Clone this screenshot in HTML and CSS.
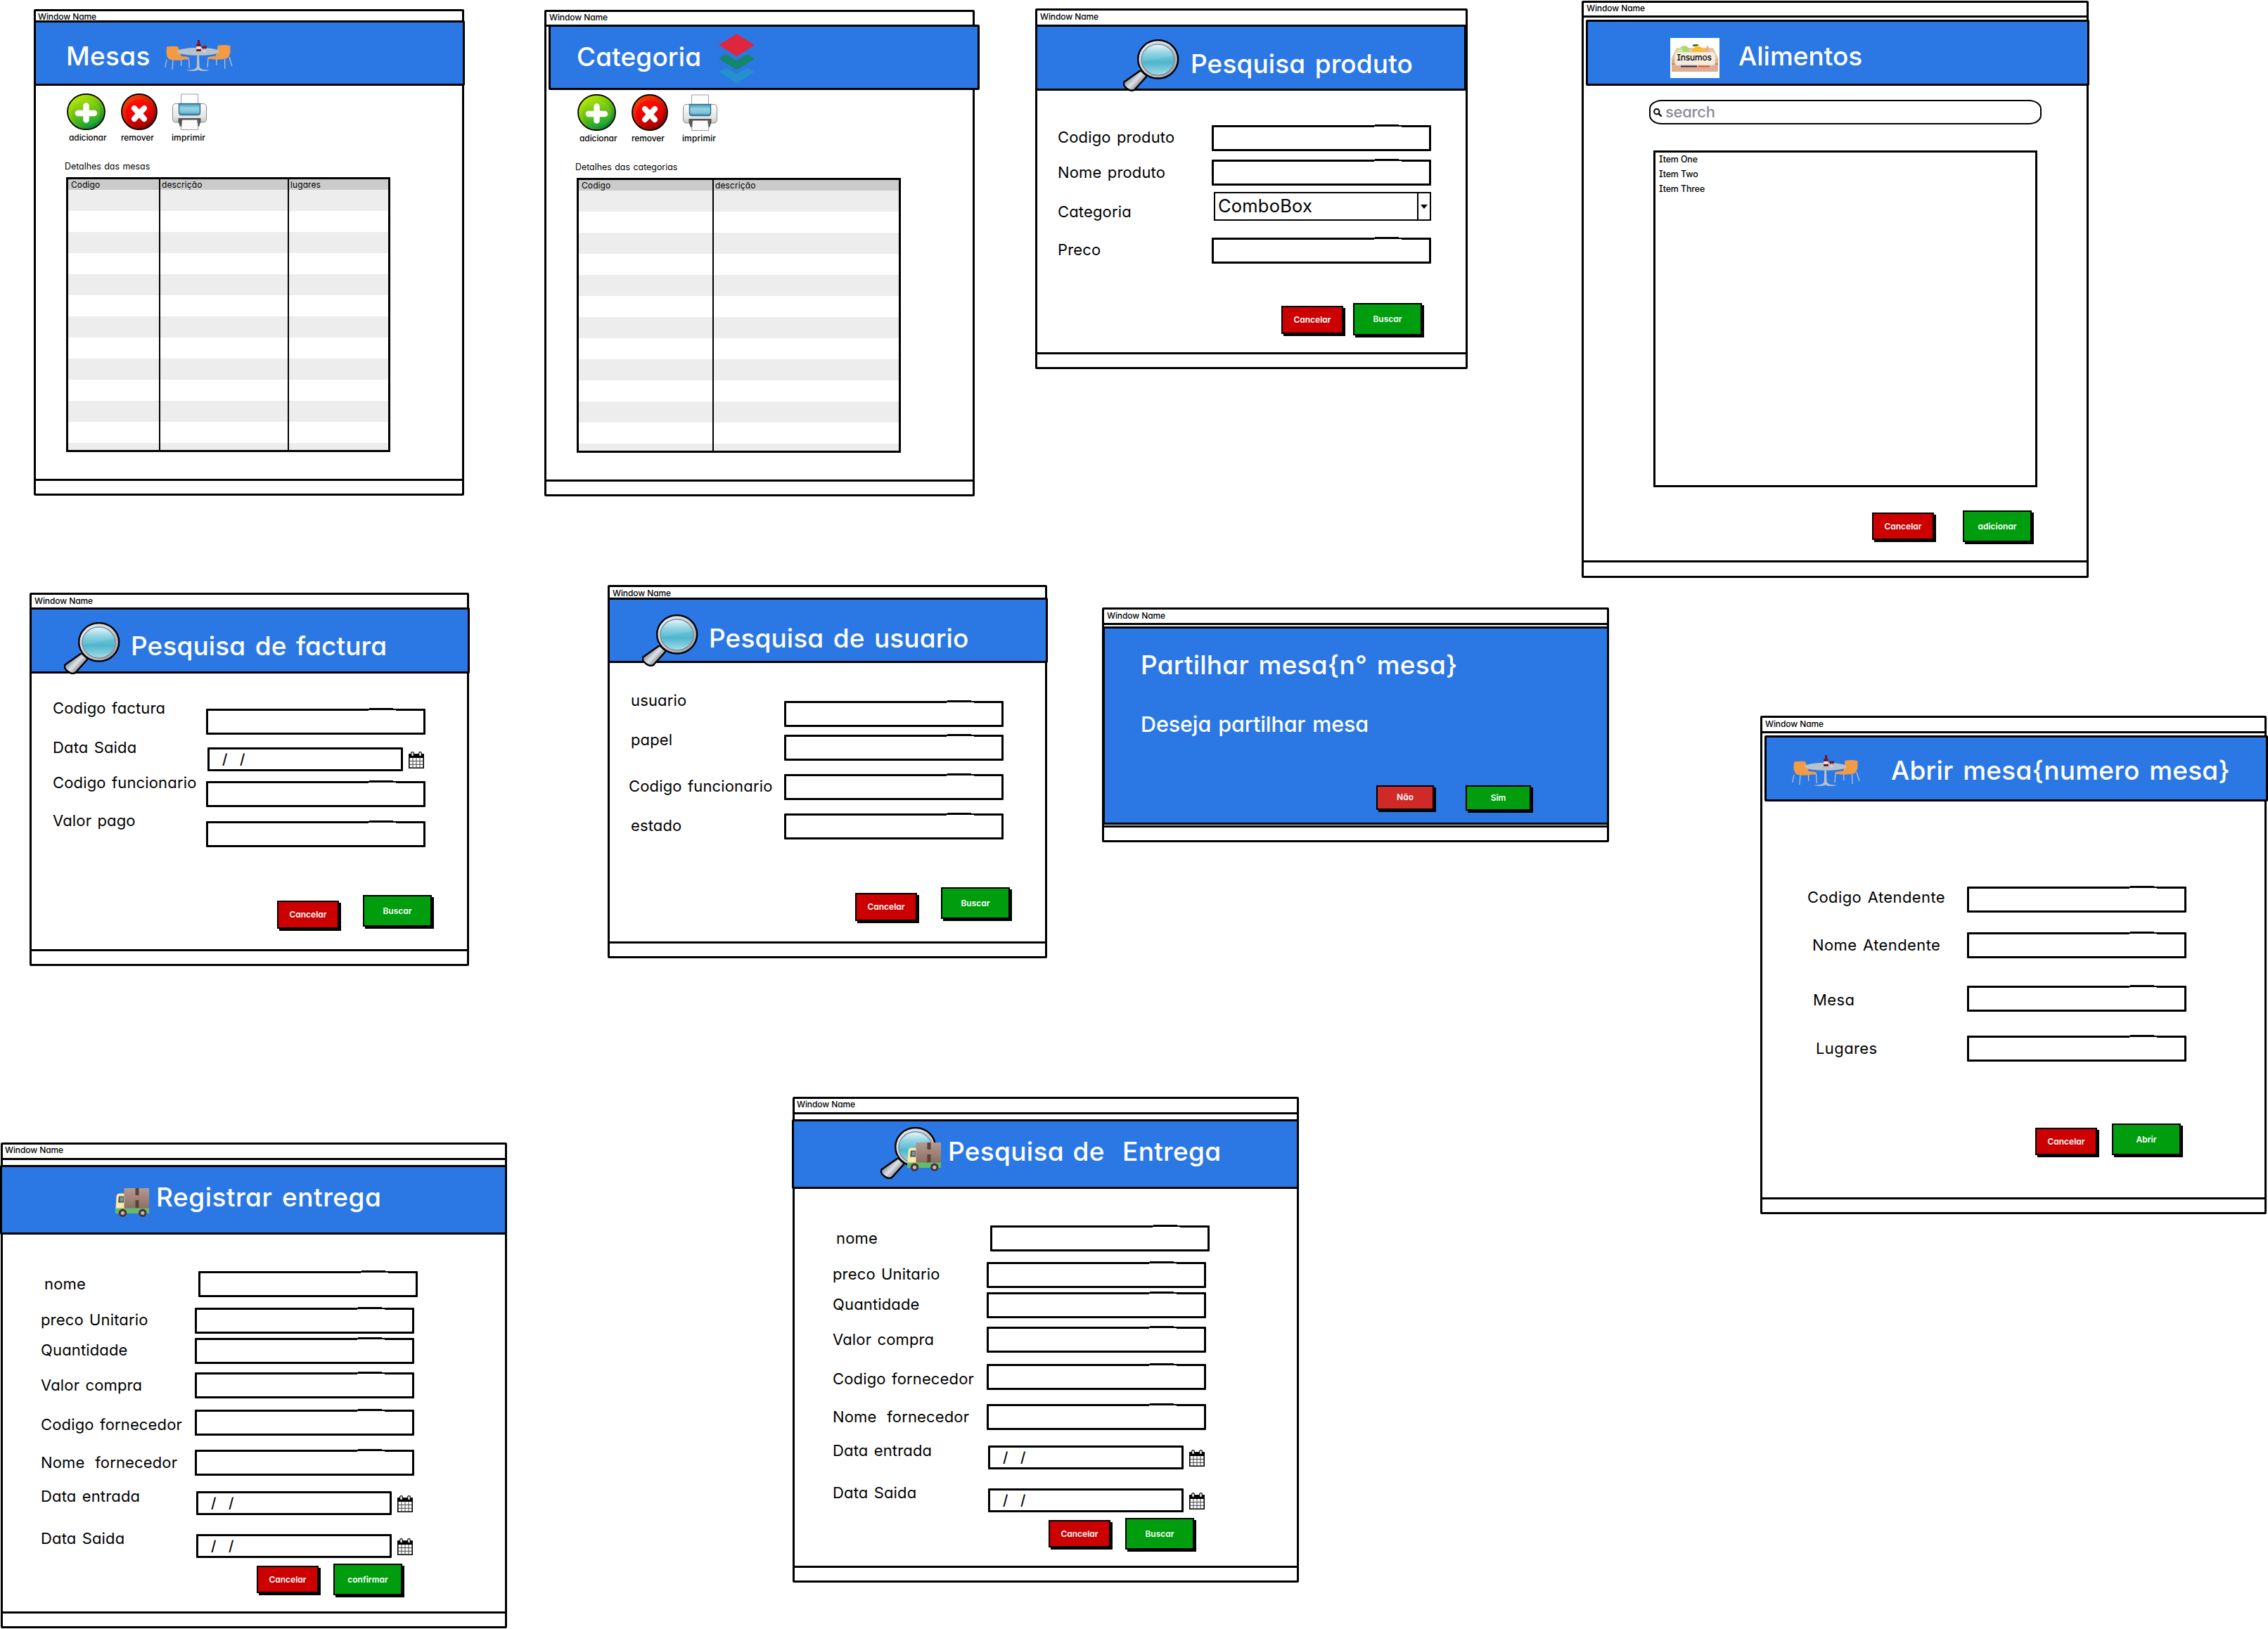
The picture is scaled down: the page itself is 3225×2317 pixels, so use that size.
FILE: index.html
```html
<!DOCTYPE html>
<html lang="pt">
<head>
<meta charset="utf-8">
<title>Wireframes - Restaurante</title>
<link rel="stylesheet" href="styles.css">
</head>
<body>
<svg class="defs" width="0" height="0" aria-hidden="true">
  <defs>
    <filter id="rough" x="-2%" y="-10%" width="104%" height="120%" color-interpolation-filters="sRGB">
      <feTurbulence type="fractalNoise" baseFrequency="0.006 0.02" numOctaves="1" seed="4" result="n"/>
      <feDisplacementMap in="SourceGraphic" in2="n" scale="2.2" xChannelSelector="R" yChannelSelector="G"/>
    </filter>
    <linearGradient id="gAdd" x1="0.1" y1="0" x2="0.8" y2="1"><stop offset="0" stop-color="#c6f500"/><stop offset="0.45" stop-color="#7cc80c"/><stop offset="1" stop-color="#007a3c"/></linearGradient>
    <linearGradient id="gAddIn" x1="0.3" y1="0" x2="0.6" y2="1"><stop offset="0" stop-color="#a5dd10"/><stop offset="0.6" stop-color="#5cbb18"/><stop offset="1" stop-color="#0da83c"/></linearGradient>
    <linearGradient id="gDel" x1="0.1" y1="0" x2="0.8" y2="1"><stop offset="0" stop-color="#ff4a00"/><stop offset="0.5" stop-color="#d81a00"/><stop offset="1" stop-color="#6d0000"/></linearGradient>
    <linearGradient id="gDelIn" x1="0.3" y1="0" x2="0.6" y2="1"><stop offset="0" stop-color="#ff1200"/><stop offset="0.5" stop-color="#f00000"/><stop offset="1" stop-color="#b00000"/></linearGradient>
    <linearGradient id="gPrn" x1="0" y1="0" x2="0" y2="1"><stop offset="0" stop-color="#ffffff"/><stop offset="0.7" stop-color="#e4e4e4"/><stop offset="1" stop-color="#c9c9c9"/></linearGradient>
    <linearGradient id="gScr" x1="0" y1="0" x2="0" y2="1"><stop offset="0" stop-color="#4a9ab8"/><stop offset="0.4" stop-color="#93d3e4"/><stop offset="0.75" stop-color="#7cc3d9"/><stop offset="1" stop-color="#3d86a8"/></linearGradient>
    <linearGradient id="gGlass" x1="0" y1="0" x2="0" y2="1"><stop offset="0" stop-color="#e8f8fb"/><stop offset="0.3" stop-color="#8fd3e3"/><stop offset="0.6" stop-color="#55b9d0"/><stop offset="1" stop-color="#c8ecf3"/></linearGradient>
    <linearGradient id="gRing" x1="0" y1="0" x2="1" y2="1"><stop offset="0" stop-color="#f4f5f8"/><stop offset="0.5" stop-color="#c9cdd6"/><stop offset="1" stop-color="#8d929e"/></linearGradient>
    <linearGradient id="gHandle" x1="0.2" y1="0.3" x2="0.8" y2="0.8"><stop offset="0" stop-color="#7b808b"/><stop offset="0.45" stop-color="#dfe2e8"/><stop offset="1" stop-color="#5c616b"/></linearGradient>
    <linearGradient id="gBox" x1="0" y1="0" x2="0" y2="1"><stop offset="0" stop-color="#b39a92"/><stop offset="1" stop-color="#8d6e63"/></linearGradient>
  </defs>
  <symbol id="add" viewBox="0 0 55 52">
    <ellipse cx="27.5" cy="26" rx="26.5" ry="25.2" fill="url(#gAdd)" stroke="#000" stroke-width="1.8"/>
    <ellipse cx="27.5" cy="27.500" rx="20.500" ry="19" fill="url(#gAddIn)"/>
    <path d="M27.5 17.500V37.500M16 28H39" stroke="#fff" stroke-width="8.500" stroke-linecap="round"/>
  </symbol>
  <symbol id="del" viewBox="0 0 52 52">
    <ellipse cx="26" cy="26" rx="25" ry="25.2" fill="url(#gDel)" stroke="#000" stroke-width="1.8"/>
    <ellipse cx="26" cy="27.500" rx="19.500" ry="19" fill="url(#gDelIn)"/>
    <path d="M19 21L33 36M33 21L19 36" stroke="#fff" stroke-width="8" stroke-linecap="round"/>
  </symbol>
  <symbol id="prn" viewBox="0 0 49 52">
    <path d="M12.500 1H36.500V16H12.500Z" fill="#fff" stroke="#9b9b9b"/>
    <path d="M5 14.500H44Q48.500 14.500 48.500 20V36Q48.500 41 44 41H5Q0.500 41 0.500 36V20Q0.500 14.500 5 14.500Z" fill="url(#gPrn)" stroke="#8c8c8c"/>
    <path d="M9.500 14.500H39.500V27Q39.500 30.500 36 30.500H13Q9.500 30.500 9.500 27Z" fill="url(#gScr)" stroke="#2f6d8c" stroke-width="1.400"/>
    <path d="M8.500 35H40.500V40L38 47H11L8.500 40Z" fill="#555"/>
    <path d="M14 37.500H35.500L37 51.500H12.500Z" fill="#fbfbfb" stroke="#9b9b9b"/>
  </symbol>
  <symbol id="mag" viewBox="0 0 80 74">
    <path d="M25 44L34 52L16.500 71.500Q12 75 5.500 70Q-1 65 1.500 60.500Z" fill="url(#gHandle)" stroke="#000" stroke-width="2.400" stroke-linejoin="round"/>
    <path d="M24 40L36 51" stroke="#b9bdc6" stroke-width="5"/>
    <ellipse cx="49.700" cy="28.300" rx="28.500" ry="27.200" fill="url(#gRing)" stroke="#000" stroke-width="2.400"/>
    <ellipse cx="49.500" cy="28.800" rx="23.500" ry="22" fill="url(#gGlass)" stroke="#7f8c99" stroke-width="1.600"/>
    <path d="M27 32Q48 29 72 23Q73 40 60 46Q48 53 36 45Q28 39 27 32Z" fill="#3fb0ca" fill-opacity="0.280"/>
  </symbol>
  <symbol id="truck" viewBox="0 0 48 41">
    <path d="M0.500 29L1.500 12Q2 7.500 6 7.500H13V29Z" fill="#ffe8a5"/>
    <path d="M4 20.500L5 11.500H12V20.500Z" fill="#455a64"/><path d="M6.500 18.500L7 13H11V18.500Z" fill="#7f97a2"/>
    <path d="M12.500 0H48V28.500H12.500Z" fill="url(#gBox)"/>
    <path d="M28.500 0H33.500V10H28.500ZM28.500 17H33.500V28H28.500Z" fill="#5d4037"/>
    <path d="M0 28.500H48V36H0Z" fill="#66bb6a"/>
    <circle cx="10.500" cy="35.300" r="5.700" fill="#4e342e"/><circle cx="10.500" cy="35.300" r="2.600" fill="#bdbdbd"/>
    <circle cx="38.800" cy="35.300" r="5.700" fill="#4e342e"/><circle cx="38.800" cy="35.300" r="2.600" fill="#bdbdbd"/>
  </symbol>
  <symbol id="dine" viewBox="0 0 97 45">
    <path d="M3 28L0.800 39M12 28L11 42M23.500 28L23.800 37M34.500 27L35.300 40M62 26L61 39M73.500 26L74 36M85.500 27L86 41M92 24L95.800 37" stroke="#c3cad3" stroke-width="1.200" fill="none"/>
    <path d="M3 9.500Q12 8 19 9.200Q21 14 24 23Q31 23 35.500 25Q35 28 30 27.500Q16 30 7 27.500Q3 25 2.500 18Z" fill="#f39b44"/>
    <path d="M93.500 8Q84 6 75.500 8Q75 16 73 22.500Q66 23 61 24.500Q61.500 27.500 66 27Q78 29 89 26Q93 23 93.500 16Z" fill="#f39b44"/>
    <ellipse cx="48" cy="16.300" rx="30" ry="5.500" fill="#b9c1c9"/>
    <path d="M46.300 21H49L49.600 38Q51 43 64.500 42.500Q55 45.500 47.700 42.500Q39 45.500 30 42.500Q44 43.500 45.800 38Z" fill="#b9c1c9"/>
    <path d="M47 0H50V4.500L51.800 6.500V16H45.200V6.500L47 4.500Z" fill="#7a1420"/><path d="M45.200 9H51.800V12.800H45.200Z" fill="#f3e8e8"/>
    <path d="M53.300 8.500H60L59.300 12.500H54Z" fill="#7a1420"/><path d="M56.700 12V16M54.500 16.200H59" stroke="#e6ebf0" stroke-width="0.800"/>
  </symbol>
  <symbol id="layers" viewBox="0 0 51 71">
    <path d="M0 54L8 49.500Q10 48.500 12 49.500L25.500 57L39 49.500Q41 48.500 43 49.500L51 54L25.500 70.500Z" fill="#2490cf"/>
    <path d="M0 35.500L8 30Q10 28.800 12 30L25.500 38L39 30Q41 28.800 43 30L51 35.500L25.500 51.500Z" fill="#14866a"/>
    <path d="M25.500 0L51 16L25.500 32.200L0 16Z" fill="#e0263f"/>
  </symbol>
  <symbol id="cal" viewBox="0 0 22 24">
    <path d="M0.800 4H21.200V23.200H0.800Z" fill="#fff" stroke="#000" stroke-width="1.600"/>
    <path d="M0 3.500H22V9H0Z"/>
    <path d="M6 9V23M11 9V23M16 9V23M1 13.500H21M1 18.300H21" stroke="#333" stroke-width="0.900"/>
    <rect x="3.700" y="0.700" width="3.600" height="6" rx="1.700" fill="#fff" stroke="#000" stroke-width="1.200"/>
    <rect x="14.700" y="0.700" width="3.600" height="6" rx="1.700" fill="#fff" stroke="#000" stroke-width="1.200"/>
  </symbol>
</svg>

<main class="board">

  <section class="win mesas">
    <div class="bar">Window Name</div>
    <header class="banner"><h1>Mesas</h1><svg class="i-dine"><use href="#dine"/></svg></header>
    <div class="body">
      <div class="tools">
        <div class="tool"><svg class="i-add"><use href="#add"/></svg><span>adicionar</span></div>
        <div class="tool"><svg class="i-del"><use href="#del"/></svg><span>remover</span></div>
        <div class="tool"><svg class="i-prn"><use href="#prn"/></svg><span>imprimir</span></div>
      </div>
      <p class="caption">Detalhes das mesas</p>
      <div class="table cols3"><span>Codigo</span><span>descrição</span><span>lugares</span></div>
    </div>
    <div class="foot"></div>
  </section>

  <section class="win categoria">
    <div class="bar line">Window Name</div>
    <header class="banner"><h1>Categoria</h1><svg class="i-layers"><use href="#layers"/></svg></header>
    <div class="body">
      <div class="tools">
        <div class="tool"><svg class="i-add"><use href="#add"/></svg><span>adicionar</span></div>
        <div class="tool"><svg class="i-del"><use href="#del"/></svg><span>remover</span></div>
        <div class="tool"><svg class="i-prn"><use href="#prn"/></svg><span>imprimir</span></div>
      </div>
      <p class="caption">Detalhes das categorias</p>
      <div class="table cols2"><span>Codigo</span><span>descrição</span></div>
    </div>
    <div class="foot"></div>
  </section>

  <section class="win produto">
    <div class="bar">Window Name</div>
    <header class="banner"><svg class="i-mag"><use href="#mag"/></svg><h1>Pesquisa produto</h1></header>
    <div class="body">
      <div class="row"><label>Codigo produto</label><div class="input"></div></div>
      <div class="row"><label>Nome produto</label><div class="input"></div></div>
      <div class="row"><label>Categoria</label><div class="combo"><span>ComboBox</span><i><svg class="i-arrow" viewBox="0 0 10 6"><path d="M0 0H10L5 6Z"/></svg></i></div></div>
      <div class="row"><label>Preco</label><div class="input"></div></div>
      <div class="actions"><div class="btn red">Cancelar</div><div class="btn green">Buscar</div></div>
    </div>
    <div class="foot"></div>
  </section>

  <section class="win alimentos">
    <div class="bar line">Window Name</div>
    <header class="banner">
      <svg class="i-food" viewBox="0 0 70 57">
        <path d="M0 0H70V57H0Z" fill="#fff"/>
        <path d="M9 14H61L69 30H1Z" fill="#ecc6a4"/>
        <circle cx="20" cy="18" r="7" fill="#a8dc6c"/><circle cx="14" cy="19" r="4.500" fill="#c9ec98"/>
        <path d="M30 19Q34 11 42 12Q48 15 50 21H28Z" fill="#fbbd23"/><path d="M46 20L54 10L55 20Z" fill="#f0b070"/>
        <path d="M31 11Q35 7 41 10Q36 14 31 11Z" fill="#3d7a1d"/>
        <path d="M2 30H68V48H2Z" fill="#dfae90"/><path d="M2 36H68V38H2Z" fill="#c08a68"/>
        <path d="M15 37H38V41.500H15Z" fill="#3c2c55"/><path d="M40 37H56V41.500H40Z" fill="#e2552a"/>
        <rect x="6.500" y="20" width="57.500" height="19" rx="4" fill="#f6f1e4" fill-opacity="0.930" stroke="#d8cdb4" stroke-width="0.700"/>
        <text x="9.500" y="32" textLength="49.500" class="food-label">Insumos</text>
      </svg>
      <h1>Alimentos</h1>
    </header>
    <div class="body">
      <div class="search"><svg class="i-find" viewBox="0 0 12 12"><circle cx="4.800" cy="4.800" r="3.700" fill="none" stroke="#000" stroke-width="2"/><path d="M7.500 7.500L11 11" stroke="#000" stroke-width="2.400" stroke-linecap="round"/></svg><span>search</span></div>
      <ul class="list"><li>Item One</li><li>Item Two</li><li>Item Three</li></ul>
      <div class="actions"><div class="btn red">Cancelar</div><div class="btn green">adicionar</div></div>
    </div>
    <div class="foot"></div>
  </section>

  <section class="win factura">
    <div class="bar">Window Name</div>
    <header class="banner"><svg class="i-mag"><use href="#mag"/></svg><h1>Pesquisa de factura</h1></header>
    <div class="body">
      <div class="row"><label>Codigo factura</label><div class="input"></div></div>
      <div class="row"><label>Data Saida</label><div class="date">/&nbsp; /</div><svg class="i-cal"><use href="#cal"/></svg></div>
      <div class="row"><label>Codigo funcionario</label><div class="input"></div></div>
      <div class="row"><label>Valor pago</label><div class="input"></div></div>
      <div class="actions"><div class="btn red">Cancelar</div><div class="btn green">Buscar</div></div>
    </div>
    <div class="foot"></div>
  </section>

  <section class="win usuario">
    <div class="bar">Window Name</div>
    <header class="banner"><svg class="i-mag"><use href="#mag"/></svg><h1>Pesquisa de usuario</h1></header>
    <div class="body">
      <div class="row"><label>usuario</label><div class="input"></div></div>
      <div class="row"><label>papel</label><div class="input"></div></div>
      <div class="row"><label>Codigo funcionario</label><div class="input"></div></div>
      <div class="row"><label>estado</label><div class="input"></div></div>
      <div class="actions"><div class="btn red">Cancelar</div><div class="btn green">Buscar</div></div>
    </div>
    <div class="foot"></div>
  </section>

  <section class="win partilhar">
    <div class="bar line">Window Name</div>
    <div class="banner">
      <h1>Partilhar mesa{n° mesa}</h1>
      <p>Deseja partilhar mesa</p>
      <div class="actions"><div class="btn red">Não</div><div class="btn green">Sim</div></div>
    </div>
    <div class="foot"></div>
  </section>

  <section class="win abrir">
    <div class="bar line">Window Name</div>
    <header class="banner"><svg class="i-dine"><use href="#dine"/></svg><h1>Abrir mesa{numero mesa}</h1></header>
    <div class="body">
      <div class="row"><label>Codigo Atendente</label><div class="input"></div></div>
      <div class="row"><label>Nome Atendente</label><div class="input"></div></div>
      <div class="row"><label>Mesa</label><div class="input"></div></div>
      <div class="row"><label>Lugares</label><div class="input"></div></div>
      <div class="actions"><div class="btn red">Cancelar</div><div class="btn green">Abrir</div></div>
    </div>
    <div class="foot"></div>
  </section>

  <section class="win entrega registrar">
    <div class="bar line">Window Name</div>
    <header class="banner"><svg class="i-truck"><use href="#truck"/></svg><h1>Registrar entrega</h1></header>
    <div class="body">
      <div class="row"><label>nome</label><div class="input"></div></div>
      <div class="row"><label>preco Unitario</label><div class="input"></div></div>
      <div class="row"><label>Quantidade</label><div class="input"></div></div>
      <div class="row"><label>Valor compra</label><div class="input"></div></div>
      <div class="row"><label>Codigo fornecedor</label><div class="input"></div></div>
      <div class="row"><label>Nome&nbsp; fornecedor</label><div class="input"></div></div>
      <div class="row"><label>Data entrada</label><div class="date">/&nbsp; /</div><svg class="i-cal"><use href="#cal"/></svg></div>
      <div class="row"><label>Data Saida</label><div class="date">/&nbsp; /</div><svg class="i-cal"><use href="#cal"/></svg></div>
      <div class="actions"><div class="btn red">Cancelar</div><div class="btn green">confirmar</div></div>
    </div>
    <div class="foot"></div>
  </section>

  <section class="win entrega pesquisa">
    <div class="bar line">Window Name</div>
    <header class="banner"><svg class="i-mag"><use href="#mag"/></svg><svg class="i-truck"><use href="#truck"/></svg><h1>Pesquisa de&nbsp; Entrega</h1></header>
    <div class="body">
      <div class="row"><label>nome</label><div class="input"></div></div>
      <div class="row"><label>preco Unitario</label><div class="input"></div></div>
      <div class="row"><label>Quantidade</label><div class="input"></div></div>
      <div class="row"><label>Valor compra</label><div class="input"></div></div>
      <div class="row"><label>Codigo fornecedor</label><div class="input"></div></div>
      <div class="row"><label>Nome&nbsp; fornecedor</label><div class="input"></div></div>
      <div class="row"><label>Data entrada</label><div class="date">/&nbsp; /</div><svg class="i-cal"><use href="#cal"/></svg></div>
      <div class="row"><label>Data Saida</label><div class="date">/&nbsp; /</div><svg class="i-cal"><use href="#cal"/></svg></div>
      <div class="actions"><div class="btn red">Cancelar</div><div class="btn green">Buscar</div></div>
    </div>
    <div class="foot"></div>
  </section>

</main>
</body>
</html>
```

FILE: styles.css
```css
* { box-sizing: border-box; margin: 0; padding: 0; }

body {
  background: #fff;
  color: #000;
  font-family: Inter, "Noto Sans", sans-serif;
  font-feature-settings: "cv11" 1;
  font-size: 12px;
  line-height: 1;
}

.defs { position: absolute; }
.board { position: relative; width: 3225px; height: 2317px; overflow: hidden; }
svg { display: block; flex: none; }

/* window frame */
.win {
  position: absolute;
  display: flex;
  flex-direction: column;
  background: #fff;
  border: 3px solid #000;
  border-radius: 2px;
  white-space: nowrap;
}
.bar { flex: none; padding: 3px 0 0 4px; font-weight: 500; letter-spacing: -0.1px; }
.bar.line { border-bottom: 3px solid #000; height: 22px; }
.banner {
  flex: none;
  display: flex;
  align-items: flex-start;
  background: #2b78e4;
  border: 3px solid #000;
  border-radius: 2px;
  color: #fff;
}
.body { flex: 1; }
.foot { flex: none; height: 21px; margin-top: auto; border-top: 3px solid #000; }
h1 { font-size: 37px; font-weight: 500; line-height: 1; letter-spacing: 0.1px; word-spacing: 3.5px; }

/* icons */
.i-add { width: 55px; height: 52px; }
.i-del { width: 52px; height: 52px; }
.i-prn { width: 49px; height: 52px; }
.i-mag { width: 80px; height: 74px; }
.i-truck { width: 48px; height: 41px; }
.i-dine { width: 97px; height: 45px; }
.i-layers { width: 51px; height: 71px; }
.i-food { width: 70px; height: 57px; }
.i-cal { width: 22px; height: 24px; margin: 6px 0 0 8px; }
.i-find { width: 12px; height: 12px; }
.i-arrow { width: 10px; height: 6px; }
.food-label { font-size: 12px; font-weight: 500; font-feature-settings: "cv11" 1, "cv08" 1; }

/* form rows */
.body { padding-left: var(--pad, 0); }
.row { display: flex; align-items: flex-start; margin-top: var(--gap); }
.row label {
  flex: none;
  width: var(--label);
  margin-top: var(--shift);
  padding-left: var(--indent, 0);
  height: 22px;
  font-size: 22px;
  letter-spacing: 0.15px;
  word-spacing: 2px;
}
.input { width: 312px; height: 37px; border: 3px solid #000; border-radius: 1px; filter: url(#rough); }
.date {
  width: 278px;
  height: 34px;
  margin-left: 2px;
  padding: 4px 0 0 18px;
  border: 3px solid #000;
  border-radius: 1px;
  font-size: 20px;
  font-weight: 500;
  letter-spacing: 2.3px;
}
.combo {
  display: flex;
  width: 309px;
  height: 41px;
  margin-left: 3px;
  border: 2px solid #000;
}
.combo span { flex: 1; padding: 5px 0 0 4px; font-size: 25.500px; letter-spacing: 0.2px; }
.combo i { display: flex; justify-content: center; width: 18px; padding-top: 16px; border-left: 2px solid #000; }

/* buttons */
.actions { display: flex; align-items: flex-start; }
.btn {
  display: flex;
  align-items: center;
  justify-content: center;
  width: 88px;
  height: 40px;
  border: 2px solid #000;
  box-shadow: 3px 3px 0 #000;
  color: #fff;
  font-weight: 600;
}
.red { background: #c00; }
.green { width: 98px; height: 45px; background: #009e0f; }

/* toolbar and tables */
.tools { display: flex; margin-left: 44px; }
.tool { width: 77px; }
.tool span { display: block; margin-top: 5px; font-weight: 500; letter-spacing: -0.1px; }
.tool:nth-child(1) span { margin-left: 3px; }
.tool:nth-child(2) { width: 72px; }
.tool:nth-child(3) { width: 52px; }
.tool:nth-child(3) svg { margin-left: 1px; }
.tool:nth-child(3) span { letter-spacing: 0.1px; }
.caption { margin: 29px 0 9px 41px; font-size: 12.400px; word-spacing: 1px; }
.table {
  display: grid;
  width: 461px;
  height: 391px;
  margin-left: 43px;
  border: 3px solid #000;
  background:
    linear-gradient(#cbcbcb, #cbcbcb) 0 0 / 100% 15px no-repeat,
    repeating-linear-gradient(#ededed 0 30px, #fff 30px 60px) 0 15px;
}
.table span { padding: 2px 0 0 2px; border-right: 2px solid #000; letter-spacing: 0.1px; }
.table span:first-child { padding-left: 4px; }
.table span:last-child { border-right: 0; }
.cols3 { grid-template-columns: 131px 183px 1fr; }
.cols2 { grid-template-columns: 192px 1fr; }

/* Mesas */
.mesas { left: 48px; top: 13px; width: 612px; height: 692px; }
.mesas .bar { height: 13px; padding: 2px 0 0 3px; }
.mesas .banner { width: 613px; height: 93px; margin-left: -3px; }
.mesas h1 { margin: 29px 0 0 43px; letter-spacing: 0.3px; }
.mesas .i-dine { margin: 25px 0 0 20px; }
.mesas .tools { margin-top: 11px; }

/* Categoria */
.categoria { left: 774px; top: 14px; width: 612px; height: 692px; }
.categoria .bar { height: 21px; padding-top: 2px; }
.categoria .banner { width: 613px; height: 93px; margin: -3px 0 0 3px; }
.categoria h1 { margin: 24px 0 0 37px; }
.categoria .i-layers { margin: 10px 0 0 25px; }
.categoria .tools { margin-top: 6px; }

/* Pesquisa produto */
.produto { left: 1472px; top: 12px; width: 615px; height: 513px; --pad: 29px; --label: 219px; }
.produto .bar { height: 20px; }
.produto .banner { width: 613px; height: 94px; margin-left: -3px; }
.produto .i-mag { margin: 18px 0 0 122px; }
.produto h1 { margin: 34px 0 0 16px; }
.produto .row:nth-child(1) { --gap: 49px; --shift: 6px; }
.produto .row:nth-child(2) { --gap: 12px; --shift: 7px; }
.produto .row:nth-child(3) { --gap: 9px; --shift: 17px; }
.produto .row:nth-child(4) { --gap: 24px; --shift: 6px; }
.produto .actions { gap: 14px; margin: 56px 0 0 318px; }
.produto .red { margin-top: 4px; }
.produto .green { height: 46px; }

/* Alimentos */
.alimentos { left: 2249px; top: 1px; width: 721px; height: 821px; }
.alimentos .bar { height: 21px; padding-top: 2px; }
.alimentos .banner { width: 716px; height: 94px; margin: 3px 0 0 3px; }
.alimentos .i-food { margin: 23px 0 0 117px; }
.alimentos h1 { margin: 30px 0 0 27px; letter-spacing: 0; }
.search {
  display: flex;
  width: 558px;
  height: 35px;
  margin: 20px 0 0 93px;
  padding-left: 4px;
  border: 2px solid #000;
  border-radius: 18px / 13px;
}
.search svg { margin-top: 10px; }
.search span { margin: 4px 0 0 5px; color: #8b8b96; font-size: 22px; font-weight: 500; letter-spacing: -0.3px; }
.list { width: 546px; height: 479px; margin: 37px 0 0 99px; padding-left: 5px; border: 3px solid #000; list-style: none; }
.list li { height: 20.900px; font-size: 12.400px; line-height: 20px; font-weight: 500; letter-spacing: -0.1px; font-feature-settings: "cv11" 1, "cv08" 1; }
.alimentos .actions { gap: 41px; margin: 33px 0 0 410px; }
.alimentos .red { height: 39px; margin-top: 3px; }
.alimentos .foot { height: 22px; }

/* Pesquisa de factura */
.factura { left: 42px; top: 843px; width: 625px; height: 531px; --pad: 30px; --label: 218px; }
.factura .bar { height: 18px; }
.factura .banner { width: 626px; height: 94px; margin-left: -3px; }
.factura .i-mag { margin: 18px 0 0 46px; }
.factura h1 { margin: 33px 0 0 15px; }
.factura .row:nth-child(1) { --gap: 50px; --shift: -12px; }
.factura .row:nth-child(2) { --gap: 18px; --shift: -11px; }
.factura .row:nth-child(3) { --gap: 14px; --shift: -9px; }
.factura .row:nth-child(4) { --gap: 20px; --shift: -12px; }
.factura .actions { gap: 34px; margin: 68px 0 0 319px; }
.factura .red, .usuario .red { margin-top: 8px; }

/* Pesquisa de usuario */
.usuario { left: 864px; top: 832px; width: 625px; height: 531px; --pad: 27px; --label: 221px; }
.usuario .bar { height: 15px; }
.usuario .banner { width: 626px; height: 93px; margin-left: -3px; }
.usuario .i-mag { margin: 21px 0 0 46px; }
.usuario h1 { margin: 36px 0 0 15px; }
.usuario .row:nth-child(1) { --gap: 54px; --shift: -12px; --indent: 3px; }
.usuario .row:nth-child(2) { --gap: 11px; --shift: -4px; --indent: 3px; }
.usuario .row:nth-child(3) { --gap: 19px; --shift: 6px; }
.usuario .row:nth-child(4) { --gap: 19px; --shift: 6px; --indent: 3px; }
.usuario .actions { gap: 34px; margin: 68px 0 0 322px; }

/* Partilhar mesa */
.partilhar { left: 1567px; top: 864px; width: 721px; height: 334px; }
.partilhar .banner { flex-direction: column; width: 720px; height: 282px; margin: 2px 0 0 -2px; }
.partilhar h1 { margin: 33px 0 0 51px; letter-spacing: 0.22px; }
.partilhar p { margin: 51px 0 0 51px; font-size: 30.500px; font-weight: 500; letter-spacing: -0.1px; word-spacing: 2px; }
.partilhar .actions { gap: 45px; margin: 71px 0 0 386px; }
.partilhar .red { width: 82px; height: 35px; background: #cf2a27; }
.partilhar .green { width: 93px; height: 36px; }

/* Abrir mesa */
.abrir { left: 2503px; top: 1018px; width: 720px; height: 709px; --pad: 64px; --label: 227px; }
.abrir .banner { width: 716px; height: 94px; margin: 3px 0 0 3px; }
.abrir .i-dine { margin: 25px 0 0 36px; }
.abrir h1 { margin: 28px 0 0 44px; letter-spacing: 0.22px; }
.abrir .row label { letter-spacing: 0.4px; }
.abrir .row:nth-child(1) { --gap: 121px; --shift: 4px; }
.abrir .row:nth-child(2) { --gap: 28px; --shift: 7px; --indent: 7px; }
.abrir .row:nth-child(3) { --gap: 39px; --shift: 9px; --indent: 8px; }
.abrir .row:nth-child(4) { --gap: 34px; --shift: 7px; --indent: 12px; }
.abrir .actions { gap: 21px; margin: 88px 0 0 324px; }
.abrir .red { margin-top: 6px; height: 39px; }

/* Registrar / Pesquisa de entrega */
.entrega { width: 720px; height: 691px; --pad: 54px; --label: 219px; }
.registrar { left: 1px; top: 1625px; }
.pesquisa { left: 1127px; top: 1560px; }
.entrega .bar { padding: 2px 0 0 3px; }
.entrega .banner { width: 721px; height: 99px; margin: 7px 0 0 -4px; }
.registrar .i-truck { margin: 30px 0 0 161px; }
.registrar h1 { margin: 24px 0 0 10px; letter-spacing: 0.5px; }
.pesquisa .i-mag { margin: 8px 0 0 123px; }
.pesquisa .i-truck { margin: 30px 0 0 -42px; }
.pesquisa h1 { margin: 24px 0 0 10px; letter-spacing: 0.3px; word-spacing: 2.5px; }
.entrega .row:nth-child(1) { --gap: 52px; --shift: 7px; --indent: 5px; --label: 224px; }
.entrega .row:nth-child(2) { --gap: 15px; --shift: 6px; }
.entrega .row:nth-child(3) { --gap: 6px; --shift: 6px; }
.entrega .row:nth-child(4) { --gap: 12px; --shift: 7px; }
.entrega .row:nth-child(5) { --gap: 16px; --shift: 10px; }
.entrega .row:nth-child(6) { --gap: 20px; --shift: 7px; }
.entrega .row:nth-child(6) label { word-spacing: 1px; }
.entrega .row:nth-child(7) { --gap: 22px; --shift: -4px; }
.entrega .row:nth-child(8) { --gap: 27px; --shift: -5px; }
.entrega .actions { gap: 21px; margin: 8px 0 0 307px; }
.entrega .red { height: 39px; margin-top: 3px; }
```
